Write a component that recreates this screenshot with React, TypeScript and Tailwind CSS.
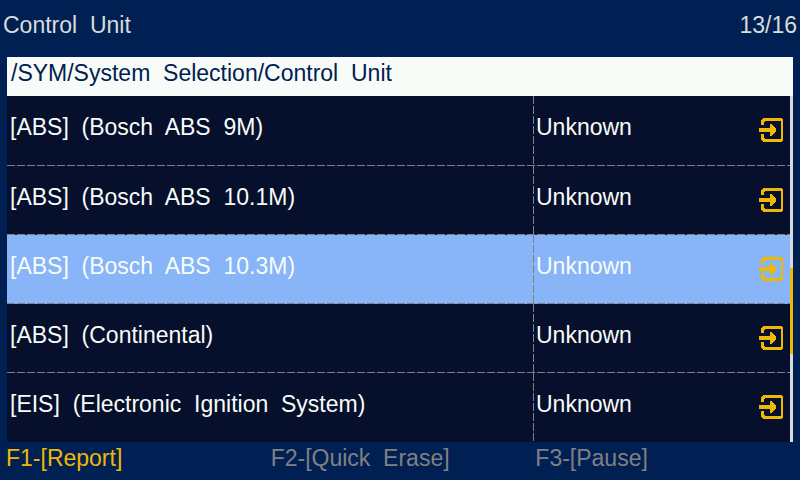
import React from "react";

interface ControlUnit {
  name: string;
  status: string;
}

interface FunctionKey {
  label: string;
  enabled: boolean;
}

const units: ControlUnit[] = [
  { name: "[ABS]  (Bosch  ABS  9M)", status: "Unknown" },
  { name: "[ABS]  (Bosch  ABS  10.1M)", status: "Unknown" },
  { name: "[ABS]  (Bosch  ABS  10.3M)", status: "Unknown" },
  { name: "[ABS]  (Continental)", status: "Unknown" },
  { name: "[EIS]  (Electronic  Ignition  System)", status: "Unknown" },
];

const functionKeys: FunctionKey[] = [
  { label: "F1-[Report]", enabled: true },
  { label: "F2-[Quick  Erase]", enabled: false },
  { label: "F3-[Pause]", enabled: false },
];

const selectedIndex = 2;

const EnterIcon: React.FC = () => (
  <svg
    viewBox="0 0 24 24"
    className="block size-6"
    fill="currentColor"
    shapeRendering="crispEdges"
    aria-hidden="true"
  >
    <path d="M4 0H22L24 2V22L22 24H4L2 22V16H5V20L6 21H21L22 20V4L21 3H6L5 4V7H2V2Z" />
    <path d="M0 10H11V6H12L17 11V13L12 18H11V14H0Z" />
  </svg>
);

const UnitRow: React.FC<{
  unit: ControlUnit;
  selected: boolean;
  last: boolean;
}> = ({ unit, selected, last }) => (
  <tr
    aria-selected={selected}
    className={`h-[69px] align-top first:h-[70px] ${
      selected ? "bg-[#88b4f8]" : "bg-[#060f2b]"
    } ${
      last
        ? ""
        : "bg-[repeating-linear-gradient(90deg,#808080_0_8px,transparent_8px_10px)] bg-[length:100%_1px] bg-bottom bg-no-repeat"
    }`}
  >
    <td className="pt-[18px] pl-[3px]">{unit.name}</td>
    <td className="w-[257px] bg-[repeating-linear-gradient(#808080_0_8px,transparent_8px_10px)] bg-[length:1px_100%] bg-no-repeat pt-[18px] pr-[7px] pl-[3px]">
      <div className="flex items-start justify-between">
        <span>{unit.status}</span>
        <button
          type="button"
          aria-label="Enter"
          className="mt-1 text-[#f0b800]"
        >
          <EnterIcon />
        </button>
      </div>
    </td>
  </tr>
);

const App: React.FC = () => {
  return (
    <div className="flex min-h-screen flex-col bg-[#002054] font-['Liberation_Sans',Arial,sans-serif] text-[23px] leading-[26px] whitespace-pre">
      <header className="flex h-[57px] justify-between px-[3px] pt-3 text-[#d8dcd8]">
        <h1>Control  Unit</h1>
        <span>13/16</span>
      </header>

      <main className="mx-[7px]">
        <nav className="h-[39px] bg-[#f8fcf8] pt-[3px] pl-1 text-[#002054]">
          /SYM/System  Selection/Control  Unit
        </nav>
        <div className="flex">
          <table className="flex-1 table-fixed border-collapse text-[#f8fcf8]">
            <tbody>
              {units.map((unit, i) => (
                <UnitRow
                  key={unit.name}
                  unit={unit}
                  selected={i === selectedIndex}
                  last={i === units.length - 1}
                />
              ))}
            </tbody>
          </table>
          <div className="flex w-[3px] flex-col bg-[#d8dcd8]">
            <div className="mt-[172px] h-[86px] bg-[#f0b800]" />
          </div>
        </div>
      </main>

      <footer className="grid grid-cols-3 pt-[3px] pl-[6px]">
        {functionKeys.map((key) => (
          <button
            key={key.label}
            type="button"
            disabled={!key.enabled}
            className="text-left text-[#f0b800] disabled:text-[#808080]"
          >
            {key.label}
          </button>
        ))}
      </footer>
    </div>
  );
};

export default App;
